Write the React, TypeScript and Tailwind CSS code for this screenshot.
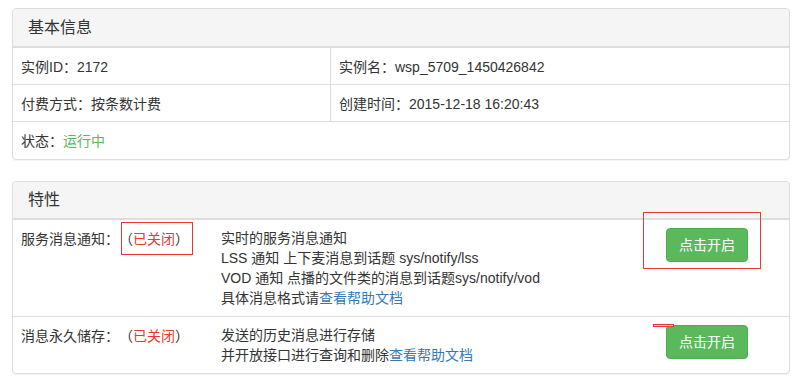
import React from 'react'

const font = { fontFamily: '"Liberation Sans", "Noto Sans CJK SC", sans-serif' }

// full-width punctuation drawn with the CJK font so it keeps its full width
const P = ({ c }: { c: string }) => (
  <span className="font-['Noto_Sans_CJK_SC',sans-serif] [text-spacing-trim:space-all]">{c}</span>
)

function Panel({ title, head, children }: { title: string; head: string; children: React.ReactNode }) {
  return (
    <div className="w-[778px] border border-[#ddd] rounded-[4px] bg-white shadow-[0_1px_1px_rgba(0,0,0,0.05)] mb-[21px]">
      <div className={`${head} bg-[#f5f5f5] rounded-t-[4px] border-b-2 border-[#ddd] px-[15px] flex items-center text-[16px] text-[#333]`}>
        {title}
      </div>
      {children}
    </div>
  )
}

function Closed() {
  return (
    <span><P c="（" /><span className="text-[#e8392f]">已关闭</span><P c="）" /></span>
  )
}

function OpenButton() {
  return (
    <button className="w-[82px] h-[34px] bg-[#5cb85c] border border-[#4cae4c] rounded-[4px] text-white text-[14px] leading-[20px]">
      点击开启
    </button>
  )
}

export default function App() {
  return (
    <div className="min-h-screen bg-white pt-2 pl-3 text-[14px] leading-[20px] text-[#333] [text-spacing-trim:space-all]" style={font}>
      <Panel title="基本信息" head="h-[39px]">
        <div className="grid grid-cols-[317px_1fr]">
          <div className="h-[37px] px-2 flex items-center border-b border-[#ddd]"><span>实例ID<P c="：" />2172</span></div>
          <div className="h-[37px] px-2 flex items-center border-b border-l border-[#ddd]"><span>实例名<P c="：" />wsp_5709_1450426842</span></div>
          <div className="h-[37px] px-2 flex items-center border-b border-[#ddd]"><span>付费方式<P c="：" />按条数计费</span></div>
          <div className="h-[37px] px-2 flex items-center border-b border-l border-[#ddd]"><span>创建时间<P c="：" />2015-12-18 16:20:43</span></div>
          <div className="col-span-2 h-[37px] px-2 flex items-center">
            <span>状态<P c="：" /><span className="text-[#5cb85c]">运行中</span></span>
          </div>
        </div>
      </Panel>

      <Panel title="特性" head="h-[38px]">
        {/* 服务消息通知 */}
        <div className="relative flex border-b border-[#ddd]">
          <div className="w-[200px] p-2">服务消息通知<P c="：" /><Closed /></div>
          <div className="flex-1 p-2">
            <div>实时的服务消息通知</div>
            <div>LSS 通知 上下麦消息到话题 sys/notify/lss</div>
            <div>VOD 通知 点播的文件类的消息到话题sys/notify/vod</div>
            <div>具体消息格式请<a className="text-[#337ab7]">查看帮助文档</a></div>
          </div>
          <div className="w-[131px] py-2 pl-2">
            <OpenButton />
          </div>
          <div className="absolute left-[108px] top-[2px] w-[72px] h-[33px] border border-[#e53935]" />
          <div className="absolute left-[630px] top-[-8px] w-[118px] h-[57px] border border-[#e53935]" />
        </div>

        {/* 消息永久储存 */}
        <div className="relative flex">
          <div className="w-[200px] p-2">消息永久储存<P c="：" /><Closed /></div>
          <div className="flex-1 p-2">
            <div>发送的历史消息进行存储</div>
            <div>并开放接口进行查询和删除<a className="text-[#337ab7]">查看帮助文档</a></div>
          </div>
          <div className="w-[131px] py-2 pl-2">
            <OpenButton />
          </div>
          <div className="absolute left-[640px] top-[7px] w-[21px] h-[3px] border border-[#e53935] bg-[#ddd]" />
        </div>
      </Panel>
    </div>
  )
}
